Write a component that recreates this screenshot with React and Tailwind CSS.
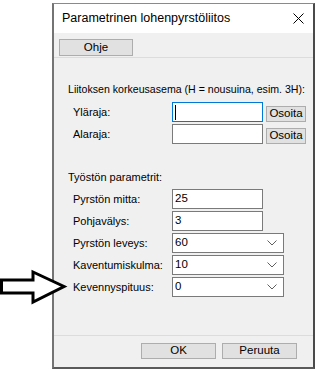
import { useState } from "react";

const font = { fontFamily: '"Liberation Sans", Arial, sans-serif' };

function Chevron() {
  return (
    <svg width="10" height="6" viewBox="0 0 10 6" className="shrink-0">
      <polyline points="0.5,0.5 5,5 9.5,0.5" fill="none" stroke="#606060" strokeWidth="1" />
    </svg>
  );
}

function TextRow({ label, value, focused, withButton }) {
  return (
    <div className="flex h-[20px] items-center">
      <span className="w-[118px] shrink-0 whitespace-nowrap pl-[19px] text-[11px] leading-[15px] text-black">{label}</span>
      <div
        className={`flex h-[20px] w-[91px] items-center bg-white px-[2px] text-[11.5px] text-black ${
          focused ? "border border-[#0078d7]" : "border border-[#7a7a7a]"
        }`}
      >
        {focused ? <span className="h-[15px] w-px bg-black" /> : value}
      </div>
      {withButton && (
        <div className="ml-[3px] mt-[4px] flex h-[16px] w-[40px] items-center justify-center border border-[#adadad] bg-[#e1e1e1] text-[11.5px] leading-none text-black">
          Osoita
        </div>
      )}
    </div>
  );
}

function SelectRow({ label, value }) {
  return (
    <div className="flex h-[20px] items-center">
      <span className="w-[118px] shrink-0 whitespace-nowrap pl-[19px] text-[11px] leading-[15px] text-black">{label}</span>
      <div className="flex h-[20px] w-[112px] items-center justify-between border border-[#7a7a7a] bg-white pl-[2px] pr-[6px] text-[11.5px] text-black">
        <span>{value}</span>
        <Chevron />
      </div>
    </div>
  );
}

function Button({ children, className = "" }) {
  return (
    <div
      className={`flex items-center justify-center border border-[#adadad] bg-[#e1e1e1] text-[11.5px] leading-none text-black ${className}`}
    >
      {children}
    </div>
  );
}

export default function App() {
  const [values] = useState({ mitta: "25", valys: "3", leveys: "60", kulma: "10", kevennys: "0" });

  return (
    <div className="relative h-[371px] w-[318px] overflow-hidden bg-white" style={font}>
      {/* Dialog window */}
      <div className="ml-[52px] mt-[3px] flex h-[366px] w-[263px] flex-col border-b-2 border-l-2 border-r-2 border-t border-b-[#5a5a5a] border-l-[#747474] border-r-[#4a4a4a] border-t-[#8a8a8a]">
        {/* Title bar */}
        <div className="flex h-[29px] items-center justify-between bg-white pl-[8px] pr-[9px]">
          <span className="whitespace-nowrap text-[12.5px] text-black">Parametrinen lohenpyrstöliitos</span>
          <svg width="11" height="11" viewBox="0 0 11 11">
            <line x1="0.5" y1="0.5" x2="10.5" y2="10.5" stroke="#000" strokeWidth="1" />
            <line x1="10.5" y1="0.5" x2="0.5" y2="10.5" stroke="#000" strokeWidth="1" />
          </svg>
        </div>

        <div className="flex flex-1 flex-col bg-[#f0f0f0]">
          {/* Toolbar */}
          <div className="border-b border-[#dcdcdc] pb-[1px] pl-[5px] pt-[6px]">
            <Button className="h-[17px] w-[74px]">Ohje</Button>
          </div>

          {/* Height section */}
          <div className="mt-[24px] whitespace-nowrap pl-[14px] text-[10.6px] leading-[15px] text-black">
            Liitoksen korkeusasema (H = nousuina, esim. 3H):
          </div>
          <div className="mt-[5px] flex flex-col gap-[2px]">
            <TextRow label="Yläraja:" focused withButton />
            <TextRow label="Alaraja:" value="" withButton />
          </div>

          {/* Machining params */}
          <div className="mt-[26px] whitespace-nowrap pl-[14px] text-[11px] leading-[15px] text-black">Työstön parametrit:</div>
          <div className="mt-[4px] flex flex-col gap-[2px]">
            <TextRow label="Pyrstön mitta:" value={values.mitta} />
            <TextRow label="Pohjavälys:" value={values.valys} />
            <SelectRow label="Pyrstön leveys:" value={values.leveys} />
            <SelectRow label="Kaventumiskulma:" value={values.kulma} />
            <SelectRow label="Kevennyspituus:" value={values.kevennys} />
          </div>

          <div className="flex-1" />

          {/* Footer */}
          <div className="flex h-[32px] justify-end gap-[6px] border-t border-[#dcdcdc] pr-[16px] pt-[7px]">
            <Button className="h-[16px] w-[75px]">OK</Button>
            <Button className="h-[16px] w-[75px]">Peruuta</Button>
          </div>
        </div>
      </div>

      {/* Annotation arrow */}
      <svg className="absolute left-0 top-[265px]" width="70" height="42" viewBox="0 0 70 42">
        <polygon
          points="1.5,15 33,15 33,7 64,21.5 33,37 33,28 1.5,28"
          fill="#fff"
          stroke="#000"
          strokeWidth="3"
          strokeLinejoin="miter"
        />
      </svg>
    </div>
  );
}
